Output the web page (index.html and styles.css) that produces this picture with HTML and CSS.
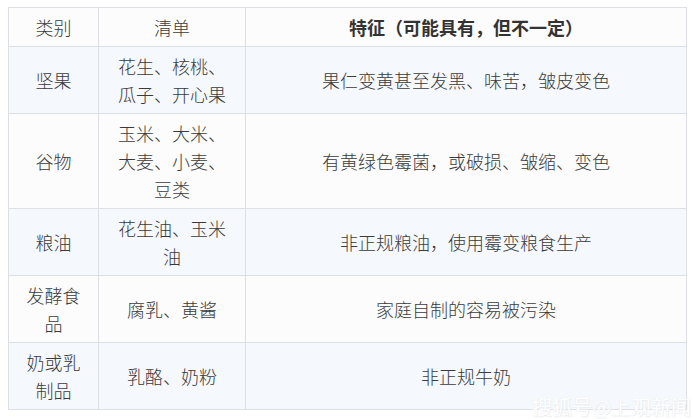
FILE: index.html
```html
<!DOCTYPE html>
<html lang="zh">
<head>
<meta charset="utf-8">
<link rel="stylesheet" href="styles.css">
</head>
<body>
<table class="food-table">
  <colgroup>
    <col class="c1"><col class="c2"><col class="c3">
  </colgroup>
  <thead>
    <tr>
      <th>类别</th>
      <th>清单</th>
      <th class="strong">特征（可能具有，但不一定）</th>
    </tr>
  </thead>
  <tbody>
    <tr class="alt">
      <td>坚果</td>
      <td>花生、核桃、瓜子、开心果</td>
      <td>果仁变黄甚至发黑、味苦，皱皮变色</td>
    </tr>
    <tr>
      <td>谷物</td>
      <td>玉米、大米、大麦、小麦、豆类</td>
      <td>有黄绿色霉菌，或破损、皱缩、变色</td>
    </tr>
    <tr class="alt">
      <td>粮油</td>
      <td>花生油、玉米油</td>
      <td>非正规粮油，使用霉变粮食生产</td>
    </tr>
    <tr>
      <td>发酵食品</td>
      <td>腐乳、黄酱</td>
      <td>家庭自制的容易被污染</td>
    </tr>
    <tr class="alt">
      <td>奶或乳制品</td>
      <td>乳酪、奶粉</td>
      <td>非正规牛奶</td>
    </tr>
  </tbody>
</table>
<div class="watermark">搜狐号@上观新闻</div>
</body>
</html>
```

FILE: styles.css
```css
html {
  margin: 0;
  padding: 0;
  background: #ffffff;
  height: 419px;
  overflow: hidden;
}
body {
  margin: 0;
  padding: 7px 8px 0 8px;
  font-family: "Noto Sans CJK SC", "Noto Sans", sans-serif;
  color: #3a3a3a;
  position: relative;
  height: 419px;
  box-sizing: border-box;
}
.food-table {
  border-collapse: collapse;
  width: 678px;
  table-layout: fixed;
  font-size: 18px;
  line-height: 28px;
}
.c1 { width: 90px; }
.c2 { width: 147px; }
.c3 { width: 441px; }
.food-table th,
.food-table td {
  border: 1px solid #dcdfe3;
  padding: 5px 12px 5px 12px;
  text-align: center;
  vertical-align: middle;
  font-weight: 300;
  background: #fcfcfd;
}
.food-table th.strong {
  font-weight: bold;
  color: #333333;
}
.food-table tr.alt td {
  background: #f5f8fd;
}
.food-table td:first-child,
.food-table th:first-child {
  padding: 5px 16px;
}
.watermark {
  position: absolute;
  right: 2px;
  bottom: 0;
  font-size: 20px;
  line-height: 24px;
  color: #ffffff;
  text-shadow: 0 0 1px #e3e6eb, 1px 1px 1px #eceef2;
}
```
